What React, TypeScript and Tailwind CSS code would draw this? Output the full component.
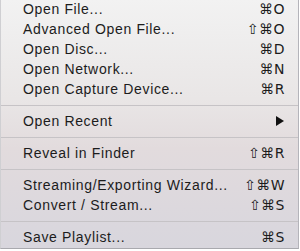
import { ReactNode } from "react";

type Item = { label: string; keys?: string; submenu?: boolean };

const groups: Item[][] = [
  [
    { label: "Open File...", keys: "⌘O" },
    { label: "Advanced Open File...", keys: "⇧⌘O" },
    { label: "Open Disc...", keys: "⌘D" },
    { label: "Open Network...", keys: "⌘N" },
    { label: "Open Capture Device...", keys: "⌘R" },
  ],
  [{ label: "Open Recent", submenu: true }],
  [{ label: "Reveal in Finder", keys: "⇧⌘R" }],
  [
    { label: "Streaming/Exporting Wizard...", keys: "⇧⌘W" },
    { label: "Convert / Stream...", keys: "⇧⌘S" },
  ],
  [{ label: "Save Playlist...", keys: "⌘S" }],
];

const Row = ({ item }: { item: Item }) => {
  let right: ReactNode = null;
  if (item.submenu) {
    right = (
      <svg width="8" height="10" viewBox="0 0 8 10" className="mr-[1px]">
        <path d="M0 0 L8 5 L0 10 Z" fill="#111" />
      </svg>
    );
  } else if (item.keys) {
    right = (
      <span className="font-['DejaVu_Sans','Liberation_Sans',sans-serif] text-[14px] tracking-[0.5px]">
        {item.keys}
      </span>
    );
  }
  return (
    <div className="flex h-[20px] items-center justify-between pl-[22px] pr-[13px]">
      <span className="tracking-[0.65px]">{item.label}</span>
      {right}
    </div>
  );
};

export default function App() {
  return (
    <div className="h-[251px] w-[300px] overflow-hidden bg-white">
      <div className="h-[250px] w-[299px] border-b border-l border-r border-b-[#a9a9ae] border-l-[#cfcfd2] border-r-[#b4b4ba] bg-[linear-gradient(180deg,#f2f2f2_0%,#e9e6e6_40%,#e2dbdd_60%,#d8d6dd_100%)] font-['Liberation_Sans',Arial,sans-serif] text-[14px] text-[#1c1c1c]">
        <div className="-mt-[1px]">
          {groups.map((g, gi) => (
            <div key={gi}>
              {gi > 0 && (
                <div className="flex h-[12px] items-center">
                  <div className="h-[1px] w-full bg-[#c6c3c6]" />
                </div>
              )}
              {g.map((it, i) => (
                <Row key={i} item={it} />
              ))}
            </div>
          ))}
        </div>
      </div>
    </div>
  );
}
